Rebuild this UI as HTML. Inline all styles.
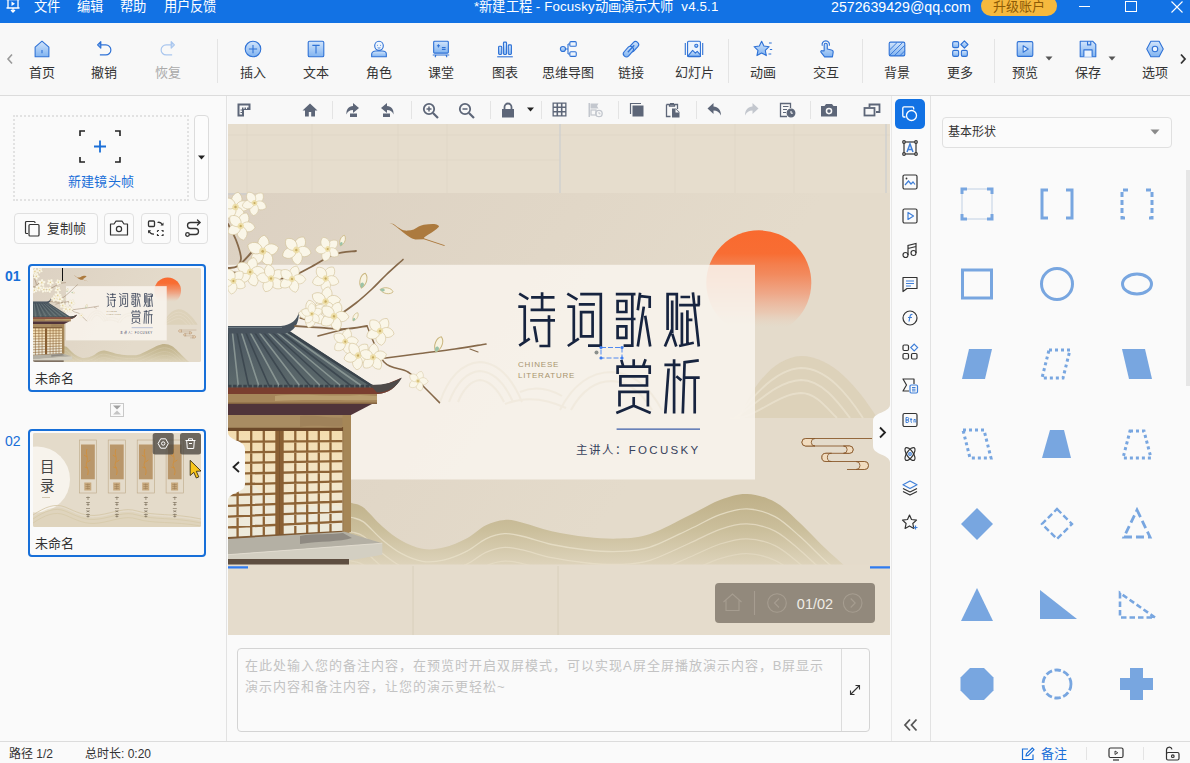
<!DOCTYPE html>
<html lang="zh-CN">
<head>
<meta charset="utf-8">
<title>Focusky</title>
<style>
*{box-sizing:border-box;margin:0;padding:0}
html,body{width:1190px;height:763px;overflow:hidden;background:#fafafa;font-family:"Liberation Sans",sans-serif;}
body{position:relative;color:#333;font-size:14px}
.abs{position:absolute}
#titlebar{position:absolute;left:0;top:0;width:1190px;height:23px;background:#1272e4;color:#fff;font-size:13.300px;line-height:16px;white-space:nowrap}
#titlebar span{position:absolute;top:-1px}
#toolbar{position:absolute;left:0;top:23px;width:1190px;height:73px;background:#f8f8f8;border-bottom:1px solid #dcdcdc}
.tb{position:absolute;top:0;width:80px;margin-left:-40px;text-align:center;height:72px;white-space:nowrap}
.tb svg{position:absolute;left:29px;top:15px;width:22px;height:22px;overflow:visible}
.tb b{position:absolute;left:0;width:80px;top:40.500px;font-weight:normal;font-size:13px;line-height:18px;color:#333}
.tb.dis b{color:#aaa}
.vsep{position:absolute;width:1px;background:#e4e4e4}
#left{position:absolute;left:0;top:96px;width:227px;height:645px;background:#fafafa;border-right:1px solid #e2e2e2}
#ctool{position:absolute;left:228px;top:96px;width:663px;height:28px;background:#f8f8f8}
#canvas{position:absolute;left:228px;top:124px;width:662px;height:511px;background:#e6ddcd;overflow:hidden}
#notes{position:absolute;left:228px;top:635px;width:663px;height:106px;background:#fafafa}
#rbar{position:absolute;left:891px;top:96px;width:40px;height:645px;background:#fafafa;border-right:1px solid #e2e2e2;border-left:1px solid #e8e8e8}
#shapes{position:absolute;left:931px;top:96px;width:259px;height:645px;background:#fafafa}
#status{position:absolute;left:0;top:741px;width:1190px;height:22px;background:#fafafa;border-top:1px solid #dcdcdc;font-size:12px;color:#333}
</style>
</head>
<body>
<div id="titlebar">
<!--TITLEBAR-->
<svg class="abs" style="left:5px;top:-2px" width="16" height="16" viewBox="0 0 16 16" fill="none" stroke="#fff" stroke-width="1.3"><path d="M1.5 1.5h13M3 1.5v8.5h10V1.5M1.5 10h13M8 10v3.5M6 12l2 2 2-2"/><path d="M6.5 3.5v4.5l3.5-2.2z" fill="#fff" stroke="none"/></svg>
<span style="left:34px">文件</span>
<span style="left:77px">编辑</span>
<span style="left:120px">帮助</span>
<span style="left:164px">用户反馈</span>
<span style="left:474px;letter-spacing:0.150px">*新建工程 - Focusky动画演示大师&nbsp; v4.5.1</span>
<span style="left:831px;font-size:14.200px">2572639429@qq.com</span>
<div class="abs" style="left:981px;top:-4px;width:76px;height:20px;border-radius:10px;background:#f6b93e;color:#8d5a06;font-size:13px;line-height:20px;text-align:center;padding-top:1px">升级账户</div>
<div class="abs" style="left:1079px;top:6px;width:11px;height:1px;background:#fff"></div>
<div class="abs" style="left:1125px;top:1px;width:12px;height:11px;border:1px solid #fff"></div>
<svg class="abs" style="left:1171px;top:1px" width="12" height="12" viewBox="0 0 12 12" stroke="#fff" stroke-width="1.1"><path d="M0.5 0.5l11 11M11.5 0.5l-11 11"/></svg>
<!--/TITLEBAR-->
</div>
<div id="toolbar">
<!--TOOLBAR-->
<svg width="0" height="0" style="position:absolute"><defs>
<linearGradient id="g" x1="0" y1="0" x2="0" y2="1"><stop offset="0" stop-color="#d3e5fb"/><stop offset="1" stop-color="#80b3f0"/></linearGradient>
<linearGradient id="gd" x1="0" y1="0" x2="0" y2="1"><stop offset="0" stop-color="#eef4fc"/><stop offset="1" stop-color="#cfe0f6"/></linearGradient>
</defs></svg>
<svg class="abs" style="left:6px;top:30px" width="8" height="12" viewBox="0 0 8 12" fill="none" stroke="#9a9a9a" stroke-width="1.6"><path d="M6 1.5L2 6l4 4.5"/></svg>
<svg class="abs" style="left:1179px;top:30px" width="8" height="12" viewBox="0 0 8 12" fill="none" stroke="#333" stroke-width="1.8"><path d="M2 1.5L6 6l-4 4.5"/></svg>
<div class="tb" style="left:42px"><svg viewBox="0 0 24 24" fill="url(#g)" stroke="#2f72d6" stroke-width="1.2" stroke-linejoin="round"><path d="M12 3.5L4.5 10v10.5h15V10z"/><path d="M12 13v3.5" fill="none"/></svg><b>首页</b></div>
<div class="tb" style="left:104px"><svg viewBox="0 0 24 24" fill="none" stroke="#2f72d6" stroke-width="1.3" stroke-linejoin="round"><path d="M8.5 4L5 7.5 8.5 11z" fill="url(#g)"/><path d="M7 7.5h7a5.5 5.5 0 0 1 0 11H7.5" /></svg><b>撤销</b></div>
<div class="tb dis" style="left:168px"><svg viewBox="0 0 24 24" fill="none" stroke="#a9c6ee" stroke-width="1.3" stroke-linejoin="round"><path d="M15.5 4L19 7.5 15.5 11z" fill="url(#gd)"/><path d="M17 7.5h-7a5.5 5.5 0 0 0 0 11h6.5" /></svg><b>恢复</b></div>
<div class="vsep" style="left:217px;top:16px;height:44px"></div>
<div class="tb" style="left:253px"><svg viewBox="0 0 24 24" fill="url(#g)" stroke="#2f72d6" stroke-width="1.2"><circle cx="12" cy="12" r="8.5"/><path d="M12 7.5v9M7.5 12h9" fill="none"/></svg><b>插入</b></div>
<div class="tb" style="left:316px"><svg viewBox="0 0 24 24" fill="url(#g)" stroke="#2f72d6" stroke-width="1.2"><rect x="3.5" y="3.5" width="17" height="17" rx="1.5"/><path d="M8 8h8M12 8v9" fill="none"/></svg><b>文本</b></div>
<div class="tb" style="left:379px"><svg viewBox="0 0 24 24" fill="url(#g)" stroke="#2f72d6" stroke-width="1.2" stroke-linejoin="round"><path d="M4 20.5v-3c0-2 2-3.3 4.5-3.3h7c2.500 0 4.500 1.300 4.500 3.300v3z"/><ellipse cx="12" cy="8.500" rx="4.700" ry="5" fill="#eef5fd"/><path d="M10.300 7.500v1M13.700 7.500v1M10.500 10.600q1.500 1 3 0" fill="none" stroke-width="0.9"/></svg><b>角色</b></div>
<div class="tb" style="left:441px"><svg viewBox="0 0 24 24" fill="url(#g)" stroke="#2f72d6" stroke-width="1.2" stroke-linejoin="round"><rect x="4" y="3.500" width="16" height="13" rx="1"/><path d="M3 18.500h18M6.500 18.500l-1 2.500M17.500 18.500l1 2.500M7.500 8.500h3.500M9.200 6.800v3.500M13 10.500h4M13 12.500h4" fill="none"/></svg><b>课堂</b></div>
<div class="tb" style="left:505px"><svg viewBox="0 0 24 24" fill="url(#g)" stroke="#2f72d6" stroke-width="1.200" stroke-linejoin="round"><rect x="5" y="9" width="3.400" height="9" rx="1"/><rect x="10.300" y="4.500" width="3.400" height="13.500" rx="1"/><rect x="15.600" y="7.500" width="3.400" height="10.500" rx="1"/><path d="M3.500 20.500h17" fill="none"/></svg><b>图表</b></div>
<div class="tb" style="left:568px"><svg viewBox="0 0 24 24" fill="url(#g)" stroke="#2f72d6" stroke-width="1.200" stroke-linejoin="round"><path d="M8.500 12h3.500M12 6.500v11M12 6.500h2M12 17.500h2" fill="none"/><circle cx="6.500" cy="12" r="2.800"/><rect x="14" y="4" width="7" height="5" rx="1.200" fill="#eef5fd"/><rect x="14" y="15" width="7" height="5" rx="1.200" fill="#eef5fd"/></svg><b>思维导图</b></div>
<div class="tb" style="left:631px"><svg viewBox="0 0 24 24" fill="url(#g)" stroke="#2f72d6" stroke-width="1.200" stroke-linejoin="round"><path d="M10.500 9.500l4-4.500a3.300 3.300 0 0 1 5 4.400l-4.500 5a3.300 3.300 0 0 1-5-0.500a3.300 3.300 0 0 1 0.500-4.400z"/><path d="M4.500 15l4.500-5a3.300 3.300 0 0 1 5 0.500a3.300 3.300 0 0 1-0.500 4.400l-4 4.500a3.300 3.300 0 0 1-5-4.400z"/><path d="M8.500 15.500l7-7.500" fill="none" stroke-width="1.500"/></svg><b>链接</b></div>
<div class="tb" style="left:694px"><svg viewBox="0 0 24 24" fill="url(#g)" stroke="#2f72d6" stroke-width="1.200" stroke-linejoin="round"><path d="M2.500 5.500v13M21.500 5.500v13" fill="none"/><rect x="5" y="3.500" width="14" height="17" rx="1.200" fill="#eef5fd"/><path d="M5.500 19.500l5-6 3 3 2-2 3.500 4v1.500h-13.500z"/><circle cx="14.500" cy="8.500" r="1.700"/></svg><b>幻灯片</b></div>
<div class="vsep" style="left:728px;top:16px;height:44px"></div>
<div class="tb" style="left:763px"><svg viewBox="0 0 24 24" fill="url(#g)" stroke="#2f72d6" stroke-width="1.200" stroke-linejoin="round"><path d="M10.500 3.500l2.500 5.300 5.700.7-4.200 4 1.100 5.700-5.100-2.800-5.100 2.800 1.100-5.700-4.200-4 5.700-.7z"/><path d="M18.500 5.500h3M19.500 12.500h2.500M18 17.500h3" fill="none"/></svg><b>动画</b></div>
<div class="tb" style="left:826px"><svg viewBox="0 0 24 24" fill="url(#g)" stroke="#2f72d6" stroke-width="1.200" stroke-linejoin="round"><path d="M8 8.500a4 4 0 1 1 7.500 0" fill="none"/><path d="M10 14V7.500a1.700 1.700 0 0 1 3.400 0V12l4.600 1c1.300.3 2 1.300 1.800 2.600l-.8 5H10.500L6.500 15.500c-.7-1 .5-2.300 1.600-1.500z"/></svg><b>交互</b></div>
<div class="vsep" style="left:862px;top:16px;height:44px"></div>
<div class="tb" style="left:897px"><svg viewBox="0 0 24 24" fill="url(#g)" stroke="#2f72d6" stroke-width="1.200" stroke-linejoin="round"><rect x="3.500" y="4.500" width="17" height="15" rx="1.500"/><path d="M4 13l8-8M4 19l14-14M9 19.500l11.500-11.500M15 19.500l5.500-5.500" fill="none" stroke-width="1"/></svg><b>背景</b></div>
<div class="tb" style="left:960px"><svg viewBox="0 0 24 24" fill="url(#g)" stroke="#2f72d6" stroke-width="1.200" stroke-linejoin="round"><rect x="4" y="4" width="6.500" height="6.500" rx="1.500"/><rect x="4" y="13.500" width="6.500" height="6.500" rx="1.500"/><rect x="13.500" y="13.500" width="6.500" height="6.500" rx="1.500"/><path d="M16.800 3.200l3.900 3.900-3.900 3.900-3.900-3.900z"/></svg><b>更多</b></div>
<div class="vsep" style="left:994px;top:16px;height:44px"></div>
<div class="tb" style="left:1025px"><svg viewBox="0 0 24 24" fill="url(#g)" stroke="#2f72d6" stroke-width="1.200" stroke-linejoin="round"><rect x="3.500" y="4" width="17" height="16" rx="1.500"/><path d="M10 8.500v7l5.500-3.500z" fill="#eef5fd"/></svg><b>预览</b></div>
<svg class="abs" style="left:1045px;top:33px" width="8" height="5" viewBox="0 0 8 5"><path d="M0.500 0.500h7L4 4.500z" fill="#555"/></svg>
<div class="tb" style="left:1088px"><svg viewBox="0 0 24 24" fill="url(#g)" stroke="#2f72d6" stroke-width="1.200" stroke-linejoin="round"><path d="M3.500 3.500h13.500l3.500 3.500v13.500h-17z"/><path d="M7.500 20.500v-7.500h9v7.500" fill="#eef5fd"/><path d="M11.500 3.500v4h3.500v-4" fill="none"/></svg><b>保存</b></div>
<svg class="abs" style="left:1108px;top:33px" width="8" height="5" viewBox="0 0 8 5"><path d="M0.500 0.500h7L4 4.500z" fill="#555"/></svg>
<div class="tb" style="left:1155px"><svg viewBox="0 0 24 24" fill="url(#g)" stroke="#2f72d6" stroke-width="1.200" stroke-linejoin="round"><path d="M7.500 3.500h9l4.500 8.500-4.500 8.500h-9L3 12z"/><circle cx="12" cy="12" r="3" fill="#eef5fd"/></svg><b>选项</b></div>
<!--/TOOLBAR-->
</div>
<div id="left">
<!--LEFT-->
<div class="abs" style="left:13px;top:19px;width:176px;height:86px;border:2px dotted #e2e2e2;border-radius:1px"></div>
<svg class="abs" style="left:79px;top:34px" width="42" height="33" viewBox="0 0 42 33" fill="none"><path d="M1 6V1h5M36 1h5v5M41 27v5h-5M6 32H1v-5" stroke="#222" stroke-width="1.6"/><path d="M21 10.500v12M15 16.500h12" stroke="#1a6fd8" stroke-width="1.800"/></svg>
<div class="abs" style="left:13px;top:77px;width:176px;text-align:center;color:#1a6fd8;font-size:13px;line-height:18px;letter-spacing:0.3px">新建镜头帧</div>
<div class="abs" style="left:194px;top:19px;width:15px;height:86px;border:1px solid #dcdcdc;border-radius:4px;background:#fcfcfc"></div>
<svg class="abs" style="left:198px;top:59px" width="7" height="5" viewBox="0 0 7 5"><path d="M0 0.500h7L3.500 4.500z" fill="#222"/></svg>
<div class="abs" style="left:14px;top:117px;width:84px;height:31px;border:1px solid #e0e0e0;border-radius:4px;background:#fbfbfb"></div>
<svg class="abs" style="left:24px;top:124px" width="17" height="17" viewBox="0 0 17 17" fill="none" stroke="#333" stroke-width="1.200"><path d="M4 13.500H2.500a1 1 0 0 1-1-1V2.500a1 1 0 0 1 1-1H10a1 1 0 0 1 1 1V3"/><rect x="5" y="4.500" width="10" height="11.500" rx="1"/></svg>
<div class="abs" style="left:47px;top:124px;font-size:13px;line-height:18px;color:#333">复制帧</div>
<div class="abs" style="left:104px;top:117px;width:30px;height:31px;border:1px solid #e0e0e0;border-radius:4px;background:#fbfbfb"></div>
<svg class="abs" style="left:109px;top:123px" width="20" height="18" viewBox="0 0 20 18" fill="none" stroke="#333" stroke-width="1.200" stroke-linejoin="round"><path d="M1.500 5h3.500l2-2.800h6l2 2.800h3.500v11h-17z"/><circle cx="10" cy="10" r="2.600"/></svg>
<div class="abs" style="left:141px;top:117px;width:30px;height:31px;border:1px solid #e0e0e0;border-radius:4px;background:#fbfbfb"></div>
<svg class="abs" style="left:146px;top:122px" width="20" height="20" viewBox="0 0 20 20" fill="none" stroke="#333" stroke-width="1.300"><rect x="2.500" y="3" width="6" height="5.500" rx="1"/><path d="M11.500 12.500h1.500M15.500 12.500h1.500v1.500M17 16v1.500h-1.500M13 17.500h-1.500v-1.500M11.500 14v-1.500" stroke-width="1.200"/><path d="M11.500 4.500q3-1 5 2.500" /><path d="M17.500 4.500v3h-3" fill="#333" stroke="none"/><path d="M8 16q-3.500.5-5-3"/><path d="M2 15.500v-3.200h3.200" fill="#333" stroke="none"/></svg>
<div class="abs" style="left:178px;top:117px;width:30px;height:31px;border:1px solid #e0e0e0;border-radius:4px;background:#fbfbfb"></div>
<svg class="abs" style="left:183px;top:122px" width="20" height="20" viewBox="0 0 20 20" fill="none" stroke="#333" stroke-width="1.300" stroke-linecap="round" stroke-linejoin="round"><path d="M17 4.500H7.500a3 3 0 0 0 0 6h5a3 3 0 0 1 0 6H6.500"/><path d="M14.500 2l2.500 2.500-2.500 2.500"/><circle cx="4.500" cy="16.500" r="1.800"/></svg>

<div class="abs" style="left:5px;top:172px;font-size:14px;font-weight:bold;color:#176fd8;line-height:16px">01</div>
<div class="abs" style="left:28px;top:168px;width:178px;height:128px;border:2px solid #176fd8;border-radius:4px;background:#fafafa"></div>
<div class="abs" id="th1" style="left:33px;top:172px;width:168px;height:94px;overflow:hidden;border-radius:2px;background:#e4dbc9">
<!--TH1-->
<svg class="abs" style="left:0;top:0" width="168" height="94" viewBox="228 193 662 372" preserveAspectRatio="none"><use href="#sA"/><rect x="358" y="264.800" width="397" height="214.700" fill="#f8f4ed" opacity="0.880"/><use href="#sB"/></svg>
<div class="abs" style="left:29px;top:-2px;width:1px;height:15px;background:#111"></div>
<!--/TH1-->
</div>
<div class="abs" style="left:35px;top:274px;font-size:13px;line-height:18px;color:#333">未命名</div>
<div class="abs" style="left:110px;top:307px;width:14px;height:14px;border:1px solid #c8c8c8;background:#fafafa"></div>
<svg class="abs" style="left:112px;top:309px" width="10" height="10" viewBox="0 0 10 10"><path d="M1 0.500h8L5 4.500z" fill="#a0a0a0"/><path d="M1 9.500h8L5 5.500z" fill="#c4c4c4"/></svg>
<div class="abs" style="left:5px;top:337px;font-size:14px;color:#176fd8;line-height:16px">02</div>
<div class="abs" style="left:28px;top:333px;width:178px;height:128px;border:2px solid #176fd8;border-radius:4px;background:#fafafa"></div>
<div class="abs" id="th2" style="left:33px;top:337px;width:168px;height:94px;overflow:hidden;border-radius:2px;background:#e4dbc9">
<!--TH2-->
<svg class="abs" style="left:0;top:0" width="168" height="94" viewBox="0 0 168 94">
<rect width="168" height="94" fill="#e4dbca"/>
<circle cx="4" cy="46.500" r="33" fill="#f7f3ec"/>
<g fill="none" stroke="#d3c5a4" stroke-width="0.800"><path d="M0 82C12 74 22 70 32 74C44 79 52 84 66 82C80 80 92 74 104 78C120 83 140 80 168 86"/><path d="M0 86C12 78 22 74 32 78C44 83 52 88 66 86C80 84 92 78 104 82C120 87 140 84 168 90"/><path d="M0 90C12 82 22 78 32 82C44 87 52 92 66 90C80 88 92 82 104 86C120 91 140 88 168 93"/></g>
<path d="M0 94V84C12 76 22 72 32 76C44 81 52 86 66 84C80 82 92 76 104 80C120 85 140 82 168 88V94Z" fill="#d9cdb0" opacity="0.500"/>
<g font-family="Liberation Sans, sans-serif" font-size="14.500" fill="#444" text-anchor="middle"><text x="14" y="38.500">目</text><text x="14" y="58">录</text></g>
<path d="M9 64.500H17" stroke="#b8a98a" stroke-width="0.600"/>
<g id="bk"><rect x="46.300" y="7" width="17.200" height="53" fill="none" stroke="#bda987" stroke-width="0.600"/><rect x="48" y="11.500" width="13.800" height="34.800" fill="#b9976b"/><path d="M54 16C52 22 56 24 53.500 30C52 34 57 36 54.500 42M51 22L54 24M57.500 27L54.500 29M51.500 34L55 35" fill="none" stroke="#cf8f3c" stroke-width="0.900"/><rect x="51.300" y="49.500" width="7" height="8" fill="#c7a97e"/><path d="M52.500 51.500H57M52.500 53.500H57M52.500 55.500H57M54.800 50.500V56.500" stroke="#9a7b52" stroke-width="0.500"/><path d="M53 64.500H57M55 63.500V67M53 69.500H57M53.500 71.500H56.500M55 69V73M53 75.500H57M53.500 77.500L56.500 79M56.500 77.500L53.500 79M53 81.500H57M55 80.500V84.500M53.500 83.500H56.500" stroke="#6d5f4c" stroke-width="0.550" fill="none"/></g>
<use href="#bk" x="28.900"/><use href="#bk" x="57.900"/><use href="#bk" x="86.800"/>
<rect x="119.700" y="0" width="21" height="21.500" rx="2.500" fill="#4f4a42" opacity="0.800"/>
<rect x="147" y="0" width="21" height="21.500" rx="2.500" fill="#4f4a42" opacity="0.800"/>
<g fill="none" stroke="#fff" stroke-width="1"><path d="M127.700 5.800h5l2.600 4.700-2.600 4.700h-5l-2.600-4.700z"/><circle cx="130.200" cy="10.500" r="1.700"/><path d="M152.500 7.500h10M155.500 7.300v-1.500h4v1.500M153.700 7.800l.6 7.700h6.400l.6-7.700M156 10.500h3"/></g>
<path d="M157.200 27.300V42.500L160.800 39.300L163.300 45L165.800 43.900L163.300 38.300L168 38Z" fill="#f7c51c" stroke="#3a2f10" stroke-width="0.900" stroke-linejoin="round"/>
</svg>
<!--/TH2-->
</div>
<div class="abs" style="left:35px;top:439px;font-size:13px;line-height:18px;color:#333">未命名</div>
<!--/LEFT-->
</div>
<div id="ctool">
<!--CTOOL-->
<style>#ctool svg{position:absolute;top:6px;overflow:visible}</style>
<svg style="left:8px" width="16" height="16" viewBox="0 0 16 16" fill="#5d6678"><path d="M1.500 1.500h13v6.500H8v6.500H1.500zM3.500 3.500v9h2.500v-1.500h-1.500v-1h1.500v-1.500h-1.500v-1h1.500V5.500h1.500v1.500h1V5.500h1.500v1.500h1V5.500h1.500v-2z" fill-rule="evenodd"/></svg>
<svg style="left:74px" width="16" height="16" viewBox="0 0 16 16" fill="#5d6678"><path d="M8 1.500L0.500 8.500h2.500v6h3.800v-4.500h2.400v4.500H13v-6h2.500z"/></svg>
<div class="vsep" style="left:104px;top:5px;height:18px"></div>
<svg style="left:116px" width="16" height="16" viewBox="0 0 16 16" fill="#5d6678"><path d="M9 1l6 5-6 5V8c-3.500 0-5.500 1.500-6.500 4.500C2 7.500 4.500 4.200 9 4z"/><rect x="6" y="11.500" width="7" height="3.500"/></svg>
<svg style="left:152px" width="16" height="16" viewBox="0 0 16 16" fill="#5d6678"><path d="M7 1L1 6l6 5V8c3.500 0 5.500 1.500 6.500 4.500C14 7.500 11.500 4.200 7 4z"/><rect x="3" y="11.500" width="7" height="3.500"/></svg>
<div class="vsep" style="left:183px;top:5px;height:18px"></div>
<svg style="left:194px" width="17" height="17" viewBox="0 0 17 17" fill="none" stroke="#5d6678" stroke-width="1.800"><circle cx="7" cy="7" r="5.200"/><path d="M11 11l5 5" stroke-width="2.200"/><path d="M4.500 7h5M7 4.500v5" stroke-width="1.500"/></svg>
<svg style="left:230px" width="17" height="17" viewBox="0 0 17 17" fill="none" stroke="#5d6678" stroke-width="1.800"><circle cx="7" cy="7" r="5.200"/><path d="M11 11l5 5" stroke-width="2.200"/><path d="M4.500 7h5" stroke-width="1.500"/></svg>
<div class="vsep" style="left:262px;top:5px;height:18px"></div>
<svg style="left:273px" width="14" height="16" viewBox="0 0 14 16" fill="#5d6678"><path d="M1 7h12v8.500H1z"/><path d="M3.500 7.500V5a3.500 3.500 0 0 1 7 0v2.500" fill="none" stroke="#5d6678" stroke-width="1.800"/></svg>
<svg style="left:299px;top:11px" width="7" height="5" viewBox="0 0 7 5"><path d="M0 0.500h7L3.500 4.500z" fill="#222"/></svg>
<div class="vsep" style="left:313px;top:5px;height:18px"></div>
<svg style="left:324px" width="15" height="15" viewBox="0 0 15 15" fill="#5d6678"><path d="M0.500 0.500h14v14h-14zM4.500 1.800H1.800v2.700h2.700zM8.900 1.800H6.100v2.700h2.800zM13.200 1.800h-2.700v2.700h2.700zM4.500 6.100H1.800v2.800h2.700zM8.900 6.100H6.100v2.800h2.800zM13.200 6.100h-2.700v2.800h2.700zM4.500 10.500H1.800v2.700h2.700zM8.900 10.500H6.100v2.700h2.800zM13.200 10.500h-2.700v2.700h2.700z" fill-rule="evenodd"/></svg>
<svg style="left:359px" width="17" height="16" viewBox="0 0 17 16" fill="#c3c7ce"><path d="M1.500 1h1.500v14H1.500zM3.500 1.500h8l-1.500 2.500 1.500 2.500h-8z"/><rect x="4" y="8" width="5" height="5" fill="none" stroke="#c3c7ce" stroke-width="1.200"/><circle cx="12" cy="11.500" r="3.200" fill="none" stroke="#c3c7ce" stroke-width="1.300"/><path d="M12 10v1.800h1.500" fill="none" stroke="#c3c7ce"/></svg>
<div class="vsep" style="left:390px;top:5px;height:18px"></div>
<svg style="left:401px" width="16" height="16" viewBox="0 0 16 16" fill="#5d6678"><path d="M3.500 3.500h11v11h-11z"/><path d="M1.500 12V1.500H12" fill="none" stroke="#5d6678" stroke-width="1.200"/></svg>
<svg style="left:437px" width="16" height="16" viewBox="0 0 16 16" fill="#5d6678"><path d="M5 1h4v2h-4z"/><path d="M1.500 2.500h3v1.500h5V2.500h3V7" fill="none" stroke="#5d6678" stroke-width="1.300"/><path d="M1.500 2.500v12h4" fill="none" stroke="#5d6678" stroke-width="1.300"/><path d="M7 6.500h4l3.500 3.500v5.500H7zM10.500 7v3.500h3.500" /></svg>
<div class="vsep" style="left:468px;top:5px;height:18px"></div>
<svg style="left:479px" width="16" height="16" viewBox="0 0 16 16" fill="#5d6678"><path d="M6.500 1L0.500 6.500l6 5.500V8.500c3.500 0 5.800 1.500 7.500 5C14 8 11 4.800 6.500 4.500z"/></svg>
<svg style="left:515px" width="16" height="16" viewBox="0 0 16 16" fill="#c3c7ce"><path d="M9.500 1l6 5.500-6 5.500V8.500c-3.500 0-5.800 1.500-7.500 5C2 8 5 4.800 9.500 4.500z"/></svg>
<svg style="left:551px" width="17" height="16" viewBox="0 0 17 16" fill="none" stroke="#5d6678" stroke-width="1.300"><path d="M8 14.500H1.500V1.500h10V6"/><path d="M4 4.500h5.500M4 7.500h4M4 10.500h3" stroke-width="1.200"/><circle cx="12" cy="11" r="3.800" fill="#5d6678"/><path d="M12 9v2.200h1.800" stroke="#fff" stroke-width="1"/></svg>
<div class="vsep" style="left:582px;top:5px;height:18px"></div>
<svg style="left:592px" width="18" height="16" viewBox="0 0 18 16" fill="#5d6678"><path d="M1 4h3.500l1.500-2h6l1.500 2H17v10.500H1zM9 5.800a3.300 3.300 0 1 0 0 6.600 3.300 3.300 0 0 0 0-6.600zM9 7.300a1.800 1.800 0 1 1 0 3.600 1.800 1.800 0 0 1 0-3.600z" fill-rule="evenodd"/></svg>
<svg style="left:635px" width="18" height="16" viewBox="0 0 18 16" fill="none" stroke="#5d6678" stroke-width="1.800"><path d="M6.500 5V2.500h10v7.500h-3.500"/><rect x="1.500" y="6" width="10" height="7.500" fill="#f8f8f8"/></svg>
<!--/CTOOL-->
</div>
<div id="canvas">
<!--CANVAS-->
<svg class="abs" style="left:0;top:0" width="662" height="511" viewBox="228 124 662 511" aria-label="诗词歌赋赏析">
<defs>
<linearGradient id="sun" gradientUnits="userSpaceOnUse" x1="0" y1="230" x2="0" y2="336"><stop offset="0" stop-color="#f96a2f"/><stop offset="0.220" stop-color="#f86d33"/><stop offset="0.320" stop-color="#f47e4c"/><stop offset="0.420" stop-color="#f28a5e"/><stop offset="0.600" stop-color="#efa585" stop-opacity="0.950"/><stop offset="0.780" stop-color="#ebc2aa" stop-opacity="0.750"/><stop offset="0.920" stop-color="#e8d3bf" stop-opacity="0"/><stop offset="1" stop-color="#e8d3bf" stop-opacity="0"/></linearGradient>
<linearGradient id="bgs" gradientUnits="userSpaceOnUse" x1="228" y1="193" x2="640" y2="470"><stop offset="0" stop-color="#dcd1c2"/><stop offset="0.600" stop-color="#e1d7c7"/><stop offset="1" stop-color="#e4dbcb"/></linearGradient>
<linearGradient id="wav" gradientUnits="userSpaceOnUse" x1="0" y1="495" x2="0" y2="566"><stop offset="0" stop-color="#bfb088"/><stop offset="0.500" stop-color="#cbbf9c"/><stop offset="1" stop-color="#ded4bc"/></linearGradient>
<linearGradient id="pane" gradientUnits="userSpaceOnUse" x1="0" y1="431" x2="0" y2="538"><stop offset="0" stop-color="#f3dcae"/><stop offset="0.450" stop-color="#f4e6c8"/><stop offset="1" stop-color="#eee9da"/></linearGradient>
<linearGradient id="roof" gradientUnits="userSpaceOnUse" x1="0" y1="330" x2="0" y2="388"><stop offset="0" stop-color="#4b5761"/><stop offset="1" stop-color="#5c696b"/></linearGradient>
<g id="fl"><g fill="#faf6e8" stroke="#d3c39a" stroke-width="0.500"><path d="M0 0C-5.500-2.500-5.500-9.500 0-12C5.500-9.500 5.500-2.500 0 0Z"/><path d="M0 0C-5.500-2.500-5.500-9.500 0-12C5.500-9.500 5.500-2.500 0 0Z" transform="rotate(72)"/><path d="M0 0C-5.500-2.500-5.500-9.500 0-12C5.500-9.500 5.500-2.500 0 0Z" transform="rotate(144)"/><path d="M0 0C-5.500-2.500-5.500-9.500 0-12C5.500-9.500 5.500-2.500 0 0Z" transform="rotate(216)"/><path d="M0 0C-5.500-2.500-5.500-9.500 0-12C5.500-9.500 5.500-2.500 0 0Z" transform="rotate(288)"/></g><circle r="2.600" fill="#ecdda4" opacity="0.900"/><circle r="1" fill="#c9ae62"/></g>
<g id="bud"><path d="M0 0C-3-3-2.500-8 0-9.500C2.500-8 3-3 0 0Z" fill="#f8f3e1" stroke="#c9b57e" stroke-width="0.600"/><path d="M0 0C-1.500-1.500-1.500-3 0-3.500C1.500-3 1.500-1.500 0 0Z" fill="#9cc3a8"/></g>
</defs>
<rect x="228" y="124" width="662" height="511" fill="#e6ddcd"/>
<g id="sA"><rect x="228" y="193" width="662" height="373" fill="url(#bgs)"/>
<path d="M247 124V193M312 124V193M398 124V193M447 124V193M560 124V193M675 124V193M735 124V193M794 124V193M886 124V193M250 566V635M334 566V635M400 566V635M448 566V635M559 566V635M640 566V635M720 566V635M806 566V635M884 566V635M228 135H890M228 160H560M228 581H890M228 610H700" stroke="#dbd1bf" stroke-width="0.700" fill="none" opacity="0.700"/>
<path d="M228 194H248M886 124V193M560 124V193M558 566V635" stroke="#c3cbd6" stroke-width="0.800" fill="none"/>
<circle cx="758.800" cy="282.800" r="52.500" fill="url(#sun)"/>
<path d="M740 418C752 385 775 357 801 356C832 356 858 388 876 416L876 418Z" fill="#cdbf98" opacity="0.330"/>
<path d="M737 418C752 397 775 369 801 368C827 368 848 395 863 418" fill="none" stroke="#e9e0cd" stroke-width="1.900" opacity="0.850"/>
<path d="M734 418C752 409 775 381 801 380C822 380 838 402 850 418" fill="none" stroke="#e9e0cd" stroke-width="1.900" opacity="0.850"/>
<path d="M730 418C752 422 775 394 801 393C817 393 828 410 837 418" fill="none" stroke="#e9e0cd" stroke-width="1.900" opacity="0.850"/>
</g>
<rect x="228" y="264.800" width="527" height="214.700" fill="#f8f4ed" opacity="0.880"/>
<g id="sB">
<g fill="none" stroke="#efe8da" stroke-width="2" opacity="0.700"><path d="M440 402C448 378 462 363 480 362C498 363 512 378 522 402"/><path d="M449 402C456 384 466 372 480 371C494 372 505 384 513 402"/><path d="M458 402C463 390 470 381 480 380C490 381 498 390 504 402"/><path d="M560 410C572 386 590 372 612 372C634 373 650 388 662 410"/><path d="M571 410C581 392 595 381 612 381C629 382 642 393 652 410"/><path d="M520 392C534 386 548 388 562 396M505 404C525 396 545 398 566 408"/></g>
<path d="M340.0 500.0C342.0 500.5 347.9 501.7 351.8 503.0C355.7 504.3 358.4 503.7 363.5 507.6C368.6 511.5 376.1 521.0 382.4 526.5C388.7 532.0 394.5 536.9 401.2 540.6C407.9 544.3 415.3 547.6 422.4 548.8C429.4 550.0 436.1 549.4 443.5 547.6C450.9 545.8 459.9 541.9 467.0 538.2C474.1 534.5 479.6 528.3 485.9 525.3C492.2 522.2 498.4 520.3 504.7 519.9C511.0 519.5 515.6 521.0 523.5 522.9C531.4 524.8 541.2 528.9 551.8 531.2C562.4 533.6 575.6 535.8 587.0 537.0C598.4 538.2 609.5 539.0 620.0 538.5C630.5 538.0 638.3 537.9 650.0 534.0C661.7 530.1 678.3 520.7 690.0 515.0C701.7 509.3 710.5 503.5 720.0 500.0C729.5 496.5 737.8 493.7 747.0 494.0C756.2 494.3 766.2 497.2 775.0 502.0C783.8 506.8 791.7 515.3 800.0 523.0C808.3 530.7 817.5 540.8 825.0 548.0C832.5 555.2 841.7 563.0 845.0 566.0L845 566L340 566Z" fill="url(#wav)"/>
<path d="M340.0 514.7C342.0 515.1 347.9 516.3 351.8 517.5C355.7 518.7 358.4 518.2 363.5 521.9C368.6 525.7 376.1 534.7 382.4 540.0C388.7 545.2 394.5 549.9 401.2 553.4C407.9 557.0 415.3 560.1 422.4 561.3C429.4 562.4 436.1 561.8 443.5 560.1C450.9 558.4 459.9 554.7 467.0 551.1C474.1 547.6 479.6 541.7 485.9 538.8C492.2 535.9 498.4 534.0 504.7 533.7C511.0 533.3 515.6 534.7 523.5 536.5C531.4 538.3 541.2 542.2 551.8 544.5C562.4 546.7 575.6 548.8 587.0 550.0C598.4 551.2 609.5 551.9 620.0 551.4C630.5 551.0 638.3 550.9 650.0 547.1C661.7 543.4 678.3 534.4 690.0 529.0C701.7 523.6 710.5 518.0 720.0 514.7C729.5 511.3 737.8 508.6 747.0 508.9C756.2 509.2 766.2 512.0 775.0 516.6C783.8 521.2 791.7 529.3 800.0 536.6C808.3 543.9 817.5 553.7 825.0 560.5C832.5 567.3 841.7 574.8 845.0 577.7" fill="none" stroke="#e8dfc8" stroke-width="1.300" opacity="0.85"/>
<path d="M340.0 529.3C342.0 529.8 347.9 530.9 351.8 532.0C355.7 533.2 358.4 532.7 363.5 536.2C368.6 539.8 376.1 548.4 382.4 553.4C388.7 558.4 394.5 562.9 401.2 566.3C407.9 569.6 415.3 572.7 422.4 573.7C429.4 574.8 436.1 574.2 443.5 572.6C450.9 571.0 459.9 567.5 467.0 564.1C474.1 560.7 479.6 555.1 485.9 552.3C492.2 549.6 498.4 547.8 504.7 547.4C511.0 547.1 515.6 548.4 523.5 550.2C531.4 551.9 541.2 555.6 551.8 557.7C562.4 559.9 575.6 561.9 587.0 563.0C598.4 564.1 609.5 564.8 620.0 564.4C630.5 563.9 638.3 563.8 650.0 560.3C661.7 556.7 678.3 548.1 690.0 543.0C701.7 537.8 710.5 532.5 720.0 529.3C729.5 526.1 737.8 523.6 747.0 523.9C756.2 524.2 766.2 526.7 775.0 531.1C783.8 535.5 791.7 543.3 800.0 550.2C808.3 557.2 817.5 566.5 825.0 573.0C832.5 579.5 841.7 586.6 845.0 589.4" fill="none" stroke="#e8dfc8" stroke-width="1.300" opacity="0.75"/>
<path d="M340.0 544.0C342.0 544.4 347.9 545.5 351.8 546.6C355.7 547.7 358.4 547.2 363.5 550.6C368.6 553.9 376.1 562.1 382.4 566.9C388.7 571.7 394.5 575.9 401.2 579.1C407.9 582.3 415.3 585.2 422.4 586.2C429.4 587.2 436.1 586.7 443.5 585.2C450.9 583.6 459.9 580.2 467.0 577.0C474.1 573.8 479.6 568.5 485.9 565.9C492.2 563.2 498.4 561.5 504.7 561.2C511.0 560.8 515.6 562.2 523.5 563.8C531.4 565.4 541.2 568.9 551.8 571.0C562.4 573.0 575.6 574.9 587.0 576.0C598.4 577.0 609.5 577.7 620.0 577.3C630.5 576.9 638.3 576.8 650.0 573.4C661.7 570.0 678.3 561.9 690.0 557.0C701.7 552.1 710.5 547.0 720.0 544.0C729.5 541.0 737.8 538.5 747.0 538.8C756.2 539.1 766.2 541.5 775.0 545.7C783.8 549.9 791.7 557.2 800.0 563.9C808.3 570.5 817.5 579.3 825.0 585.5C832.5 591.7 841.7 598.5 845.0 601.1" fill="none" stroke="#e8dfc8" stroke-width="1.300" opacity="0.65"/>
<path d="M340.0 558.6C342.0 559.0 347.9 560.1 351.8 561.1C355.7 562.1 358.4 561.7 363.5 564.9C368.6 568.1 376.1 575.9 382.4 580.4C388.7 584.9 394.5 588.9 401.2 591.9C407.9 595.0 415.3 597.7 422.4 598.7C429.4 599.6 436.1 599.1 443.5 597.7C450.9 596.2 459.9 593.0 467.0 590.0C474.1 586.9 479.6 581.9 485.9 579.4C492.2 576.9 498.4 575.3 504.7 575.0C511.0 574.6 515.6 575.9 523.5 577.4C531.4 579.0 541.2 582.3 551.8 584.2C562.4 586.2 575.6 588.0 587.0 589.0C598.4 590.0 609.5 590.6 620.0 590.2C630.5 589.8 638.3 589.7 650.0 586.5C661.7 583.3 678.3 575.6 690.0 570.9C701.7 566.3 710.5 561.5 720.0 558.6C729.5 555.8 737.8 553.4 747.0 553.7C756.2 554.0 766.2 556.3 775.0 560.3C783.8 564.2 791.7 571.2 800.0 577.5C808.3 583.8 817.5 592.1 825.0 598.0C832.5 603.9 841.7 610.3 845.0 612.8" fill="none" stroke="#e8dfc8" stroke-width="1.300" opacity="0.55"/>
<rect x="228" y="564.500" width="662" height="71" fill="#e5dccc"/>
<path d="M413 566V635M558 566V635" stroke="#d6ccb8" stroke-width="0.800"/>
<g fill="#f1dcbf" stroke="#8a5a2c" stroke-width="0.900"><path d="M872 438.500H805.700A3.750 3.750 0 0 0 805.700 446H849.500A3.650 3.650 0 0 1 849.500 453.300H826A4.100 4.100 0 0 0 826 461.500H864.500A4 4 0 0 1 864.500 469.500H847" fill="none"/><path d="M815 438.500H805.700A3.750 3.750 0 0 0 805.700 446H815A3.750 3.750 0 0 1 815 438.500Z"/><path d="M843.500 446H849.500A3.650 3.650 0 0 1 849.500 453.300H843.500A3.650 3.650 0 0 0 843.500 446Z"/><path d="M831.500 453.300H826A4.100 4.100 0 0 0 826 461.500H831.500A4.100 4.100 0 0 1 831.500 453.300Z"/><path d="M856 461.500H864.500A4 4 0 0 1 864.500 469.500H856A4 4 0 0 0 856 461.500Z"/></g>
<path d="M228 414H351V531L343 538H228Z" fill="#a98c62"/>
<path d="M300 416C315 414 335 420 350 417V426C335 428 315 424 300 427Z" fill="#9a7c55" opacity="0.600"/>
<rect x="342.500" y="414" width="8.500" height="118" fill="#a58657"/>
<path d="M342.500 427V533" stroke="#7a5530" stroke-width="1.200"/>
<path d="M228 431H342.500V531.700L228 538Z" fill="url(#pane)"/>
<path d="M228 470C250 476 262 498 280 505C300 512 330 500 342 508V531.700L228 538Z" fill="#ece9dc" opacity="0.700"/>
<path d="M237.6 431V537.5M251.2 431V536.7M263.8 431V536.0M295.3 431V534.3M307.2 431V533.6M318.8 431V533.0M330.5 431V532.4M228 441.7L342.5 441.1M228 452.4L342.5 451.1M228 463.1L342.5 461.2M228 473.8L342.5 471.3M228 484.5L342.5 481.4M228 495.2L342.5 491.4M228 505.9L342.5 501.5M228 516.6L342.5 511.6M228 527.3L342.5 521.6" stroke="#8e6436" stroke-width="2.300" fill="none"/>
<path d="M279.500 431V535" stroke="#8a6034" stroke-width="8.400"/>
<path d="M279.500 431V535" stroke="#74502c" stroke-width="1" opacity="0.600"/>
<path d="M228 429.400H343" stroke="#6c4829" stroke-width="3.200"/>
<path d="M228 538.200L342.500 532" stroke="#7e5a34" stroke-width="2.600"/>
<path d="M228 403.500H373L351 415H228Z" fill="#50343a"/>
<path d="M228 391.500H377V404H228Z" fill="#a6865a"/>
<path d="M275 396C300 393 330 397 360 395L377 396V400C350 401 310 399 275 401Z" fill="#c2a878" opacity="0.700"/>
<path d="M228 403.200H377" stroke="#6b4a30" stroke-width="0.800"/>
<path d="M228 330L288 332L372 386C386 385 395 382 401 378C396 388 388 393 378 394L376 388H228Z" fill="url(#roof)"/>
<path d="M228.0 331.0L228.0 386M236.6 331.0L248.6 386M245.1 331.0L269.1 386M253.7 331.0L289.7 386M262.3 331.0L310.3 386M270.9 331.0L330.9 386M279.4 331.0L351.4 386M288.0 331.0L372.0 386" stroke="#3d4850" stroke-width="1.600" fill="none"/>
<path d="M232.3 331.0L238.3 386M240.9 331.0L258.9 386M249.4 331.0L279.4 386M258.0 331.0L300.0 386M266.6 331.0L320.6 386M275.1 331.0L341.1 386M283.7 331.0L361.7 386" stroke="#919d9a" stroke-width="1.600" fill="none" opacity="0.850"/>
<path d="M288 332L372 386" stroke="#3a444c" stroke-width="2.200"/>
<path d="M228 386.300H373" stroke="#39424a" stroke-width="3" stroke-dasharray="3.500 1.600"/>
<path d="M228 387.500H378L401 378C396 388 388 393 378 394H228Z" fill="#7a3e2f"/>
<path d="M370 385C386 385 395 382 402 377.500C396 388 388 392 377 392.500Z" fill="#4e4a48"/>
<path d="M228 326H281C291 325 297 320 299 312C299 324 294 332 284 333.500H228Z" fill="#48535d"/>
<path d="M228 327.500H282" stroke="#6d7a82" stroke-width="1"/>
<path d="M228 539L344.600 531.700L382.300 543.200L228 554.700Z" fill="#b4b0a4"/>
<path d="M300 536C315 533 330 535 343 533L352 538C340 542 320 541 300 544Z" fill="#7f7b74" opacity="0.700"/>
<path d="M228 554.700L382.300 543.200V554.700L348.800 560.500H228Z" fill="#d3cfc2"/>
<path d="M228 554.700L382.300 543.200" stroke="#e4e0d4" stroke-width="0.800"/>
<path d="M228 559H349V564.500H228Z" fill="#5e4e40"/>
<path d="M228.0 224.0C229.3 226.7 233.8 234.3 236.0 240.0C238.2 245.7 240.7 253.7 241.0 258.0C241.3 262.3 238.5 264.7 238.0 266.0" fill="none" stroke="#86694a" stroke-width="1.8" stroke-linecap="round"/>
<path d="M228.0 268.0C229.7 267.7 234.2 268.5 238.0 266.0C241.8 263.5 248.8 255.2 251.0 253.0" fill="none" stroke="#86694a" stroke-width="2.0" stroke-linecap="round"/>
<path d="M228.0 272.0C231.7 272.3 240.7 272.9 250.0 274.0C259.3 275.1 274.2 279.5 284.0 278.5C293.8 277.5 300.7 272.0 309.0 268.0C317.3 264.0 326.2 257.3 334.0 254.5C341.8 251.7 352.3 251.6 356.0 251.0" fill="none" stroke="#86694a" stroke-width="1.8" stroke-linecap="round"/>
<path d="M403.0 259.5C400.2 262.1 391.2 270.1 386.0 275.0C380.8 279.9 377.0 284.3 372.0 289.0C367.0 293.7 361.7 298.5 356.0 303.0C350.3 307.5 341.0 313.8 338.0 316.0" fill="none" stroke="#86694a" stroke-width="1.7" stroke-linecap="round"/>
<path d="M295.0 326.0C299.3 326.3 312.7 327.2 321.0 327.7C329.3 328.2 337.3 329.3 345.0 329.0C352.7 328.7 363.3 326.5 367.0 326.0" fill="none" stroke="#86694a" stroke-width="1.8" stroke-linecap="round"/>
<path d="M318.0 336.0C322.5 334.8 340.5 330.2 345.0 329.0" fill="none" stroke="#86694a" stroke-width="1.5" stroke-linecap="round"/>
<path d="M382.0 358.5C388.3 357.7 407.8 355.1 420.0 353.5C432.2 351.9 444.0 350.6 455.0 349.0C466.0 347.4 480.8 344.8 486.0 344.0" fill="none" stroke="#86694a" stroke-width="1.6" stroke-linecap="round"/>
<path d="M367.0 326.0C369.8 332.0 377.2 354.3 384.0 362.0C390.8 369.7 401.2 367.7 408.0 372.0C414.8 376.3 419.8 382.9 425.0 388.0C430.2 393.1 437.1 400.2 439.5 402.6" fill="none" stroke="#86694a" stroke-width="1.5" stroke-linecap="round"/>
<path d="M300.0 318.0C302.7 318.7 309.7 322.3 316.0 322.0C322.3 321.7 334.3 317.0 338.0 316.0" fill="none" stroke="#86694a" stroke-width="1.3" stroke-linecap="round"/>
<path d="M470.0 349.0C471.3 349.5 476.7 351.5 478.0 352.0" fill="none" stroke="#86694a" stroke-width="1.2" stroke-linecap="round"/>
<use href="#fl" transform="translate(235.5 207.0) rotate(10) scale(1.25)"/>
<use href="#fl" transform="translate(254.5 203.0) rotate(40) scale(1.05)"/>
<use href="#fl" transform="translate(240.7 226.0) rotate(25) scale(1.20)"/>
<use href="#fl" transform="translate(262.7 251.3) rotate(5) scale(1.35)"/>
<use href="#fl" transform="translate(296.3 250.0) rotate(30) scale(1.25)"/>
<use href="#fl" transform="translate(327.7 249.0) rotate(50) scale(1.05)"/>
<use href="#fl" transform="translate(250.2 272.0) rotate(15) scale(1.25)"/>
<use href="#fl" transform="translate(271.0 278.5) rotate(60) scale(1.20)"/>
<use href="#fl" transform="translate(292.0 279.0) rotate(20) scale(1.15)"/>
<use href="#fl" transform="translate(325.6 278.5) rotate(35) scale(1.15)"/>
<use href="#fl" transform="translate(233.4 281.0) rotate(45) scale(1.10)"/>
<use href="#fl" transform="translate(325.6 301.6) rotate(10) scale(1.25)"/>
<use href="#fl" transform="translate(313.0 314.0) rotate(55) scale(1.20)"/>
<use href="#fl" transform="translate(334.0 316.3) rotate(20) scale(1.25)"/>
<use href="#fl" transform="translate(380.0 331.0) rotate(30) scale(1.20)"/>
<use href="#fl" transform="translate(345.2 341.6) rotate(15) scale(1.10)"/>
<use href="#fl" transform="translate(358.0 355.5) rotate(40) scale(1.20)"/>
<use href="#fl" transform="translate(373.0 357.3) rotate(5) scale(1.15)"/>
<use href="#fl" transform="translate(311.9 313.9) rotate(70) scale(0.90)"/>
<use href="#fl" transform="translate(418.0 381.0) rotate(20) scale(0.85)"/>
<use href="#bud" transform="translate(340.5 246.0) rotate(20) scale(1.20)"/>
<use href="#bud" transform="translate(361.3 288.0) rotate(15) scale(1.60)"/>
<use href="#bud" transform="translate(380.0 289.5) rotate(100) scale(1.40)"/>
<use href="#bud" transform="translate(435.8 352.0) rotate(20) scale(1.70)"/>
<use href="#bud" transform="translate(353.0 321.0) rotate(30) scale(1.00)"/>
<path d="M389.300 223.100L393.500 223.900C396 225.500 398 227.500 399.400 228.100C401 229.500 402.500 230 403.600 230.200C405 230.600 406.500 230.700 407.800 230.600C410 230.300 412 229.900 413.700 229.400C415.500 228.500 417 227.500 418.700 226.400C420.500 225.500 422 225 423.800 224.700C428 224.200 432 224 435.500 224.200C437 224.600 438.300 225.200 438.900 226L438.900 226.800C437.500 228.300 435.800 229.700 433.900 231C432 232.300 430 233.600 428 234.800C426.500 235.800 425 236.800 423.800 237.800L424.500 238.400L444.800 245.300L444.400 245.900L423.800 239.300L415.400 239.500C413 238.800 411 238 409.500 236.900C407.500 235.600 405.500 234.200 403.600 232.700C401.500 231.200 399.500 229.600 397.700 228.100C396 226.800 394.300 225.500 392.700 224.300Z" fill="#ac7a3e"/>
<path d="M519.2 293.7L528.3 299.2M518.3 306.6H524.7V341M519.2 345.6L529.7 338.7M531.1 297.4H554.5M542.1 292.3V309.8M530.6 309.8H555M530.2 320.3H555M549 315.3V346H539.4M534.3 326.3L537.1 342.3M567.3 293.7L577.4 299.7M567.3 306.6H573.8V341.9M567.8 346L578.8 338.7M580.2 294.2H600.8V345.6H588M578.8 304.3H594.9M581.1 312.1H592.6V336.4H581.1ZM615.8 294.2H635.5M632.3 294.2V345.6H623.6M617.6 301H626.3V312H617.6ZM615.8 319H635.5M617.6 326.3H626.3V337.8H617.6ZM640.1 292.8L637.8 310.2M640.1 296.2L649.7 297.2V308M643.8 306.6L637.8 346.5M645.2 315.7L650.2 346.5M667.6 330V294.2H676.8V330M672.2 300.6V333M672.2 329L664.9 346.5M672.2 333.6L676.3 346.5M680.5 297H690.1M679.1 305.2H699.7M692.9 292.3L698.8 346.5M698.8 295.5V305.2M687.4 310.2V343.7M687.4 319.9H692.4M681.9 312.5V345.4M679.1 346L693.8 342.8M621.3 359.8L623.1 365.8M633.7 359.3V366.2M645.6 359.3L643.3 365.8M617.6 374V366.7H649.7V374M620.4 376.3H647V385.5H620.4ZM619.5 406.6V391.9H647.9V406.6M633.7 397V405.7M616.3 413L633.7 405.7L650.7 413M664.4 364.8H680.5M674.1 359.3V413.5M668.6 368.5L665.3 413.5M676.3 376.3L681.4 380.4M698.8 360.3L684.6 362.3L682.8 413.5M684.6 377.7H699.7M694.7 377.7V413.5" fill="none" stroke="#17243f" stroke-width="2.700" stroke-linecap="butt" stroke-linejoin="miter"/>
<g font-family="Liberation Sans, sans-serif" font-size="8" fill="#a8946e" letter-spacing="0.800"><text x="518" y="366.500">CHINESE</text><text x="518" y="377.500">LITERATURE</text></g>
<path d="M616.600 429.200H700" stroke="#3a5ca8" stroke-width="1.300"/>
<text x="700.500" y="453.500" text-anchor="end" font-family="Liberation Sans, sans-serif" font-size="11.500" fill="#36425c" letter-spacing="2.300">主讲人：FOCUSKY</text>
</g>
<g><circle cx="596.500" cy="352.500" r="2" fill="#8a8f8c"/><rect x="601" y="347.500" width="21" height="10.500" fill="none" stroke="#3d7df0" stroke-width="0.900" stroke-dasharray="5 2"/><g fill="#3d7df0"><circle cx="601" cy="347.500" r="1.600"/><circle cx="622" cy="347.500" r="1.600"/><circle cx="601" cy="358" r="1.600"/><circle cx="622" cy="358" r="1.600"/></g></g>
<path d="M228 567.300H248M870 567.300H890" stroke="#2f7bf0" stroke-width="2.200"/>
<rect x="715" y="583" width="160" height="40" rx="4" fill="#72695d" opacity="0.720"/>
<g fill="none" stroke="#a69d90" stroke-width="1.100"><path d="M723.500 602L732.500 594L741.500 602M726 600V610.500H739V600"/><path d="M754.500 591V615"/><circle cx="777" cy="603" r="9.300"/><path d="M779 598.500L774.500 603L779 607.500"/><circle cx="852.700" cy="603" r="9.300"/><path d="M850.700 598.500L855.200 603L850.700 607.500"/></g>
<text x="815" y="608.500" text-anchor="middle" font-family="Liberation Sans, sans-serif" font-size="14.500" fill="#efece5">01/02</text>
<path d="M228 433C229 441 245 440 245 449V484C245 493 229 492 228 500Z" fill="#fafafa"/>
<path d="M239 462L233.500 467L239 472" fill="none" stroke="#222" stroke-width="1.800"/>
<path d="M890 405C889 413 873 412 873 421V446C873 455 889 454 890 462Z" fill="#fafafa"/>
<path d="M880 427.500L885 432.500L880 437.500" fill="none" stroke="#222" stroke-width="1.800"/>
</svg>
<!--/CANVAS-->
</div>
<div id="notes">
<!--NOTES-->
<div class="abs" style="left:9px;top:13px;width:633px;height:84px;border:1px solid #d4d4d4;border-radius:4px;background:#fafafa"></div>
<div class="abs" style="left:613px;top:14px;width:1px;height:82px;background:#dcdcdc"></div>
<div class="abs" style="left:17px;top:20px;width:586px;font-size:13px;line-height:21px;color:#c3c3c3;letter-spacing:1px">在此处输入您的备注内容，在预览时开启双屏模式，可以实现A屏全屏播放演示内容，B屏显示演示内容和备注内容，让您的演示更轻松~</div>
<svg class="abs" style="left:621px;top:49px" width="12" height="12" viewBox="0 0 12 12" fill="none" stroke="#333" stroke-width="1.100"><path d="M1.500 10.500l9-9M6.500 1.500h4v4M5.500 10.500h-4v-4"/></svg>
<!--/NOTES-->
</div>
<div id="rbar">
<!--RBAR-->
<style>#rbar svg{position:absolute;left:9px;overflow:visible}</style>
<div class="abs" style="left:3px;top:3px;width:30px;height:30px;border-radius:5px;background:#1272e4"></div>
<svg style="top:9px" width="18" height="18" viewBox="0 0 18 18" fill="none" stroke="#fff" stroke-width="1.300"><path d="M4.500 12H3a1.200 1.200 0 0 1-1.200-1.200V3A1.200 1.200 0 0 1 3 1.800h8.500A1.200 1.200 0 0 1 12.700 3v1.500"/><circle cx="10.500" cy="10.500" r="5" fill="#1272e4"/></svg>
<svg style="top:43px" width="18" height="18" viewBox="0 0 18 18" fill="none" stroke="#333" stroke-width="1.200"><rect x="3" y="3" width="12" height="12"/><circle cx="3" cy="3" r="1.300" fill="#fafafa"/><circle cx="15" cy="3" r="1.300" fill="#fafafa"/><circle cx="3" cy="15" r="1.300" fill="#fafafa"/><circle cx="15" cy="15" r="1.300" fill="#fafafa"/><path d="M6 13l3-8 3 8M7 10.500h4" stroke="#3f7fd8" stroke-width="1.500"/></svg>
<svg style="top:77px" width="18" height="18" viewBox="0 0 18 18" fill="none" stroke="#333" stroke-width="1.200"><rect x="2" y="2" width="14" height="14" rx="1.500"/><path d="M4 12l3.500-4 2.500 3 2-2 2 2.500" stroke="#3f7fd8"/><circle cx="5.500" cy="5.500" r="0.900" fill="#333" stroke="none"/></svg>
<svg style="top:111px" width="18" height="18" viewBox="0 0 18 18" fill="none" stroke="#333" stroke-width="1.200"><rect x="2" y="2" width="14" height="14" rx="1.500"/><path d="M7 5.500v7l5.500-3.500z" stroke="#3f7fd8" stroke-linejoin="round"/></svg>
<svg style="top:145px" width="18" height="18" viewBox="0 0 18 18" fill="none" stroke="#333" stroke-width="1.200"><circle cx="4.500" cy="14" r="2.500"/><circle cx="12.500" cy="12" r="2.500"/><path d="M7 14V4.500l8-2V12M7 7.500l8-2"/></svg>
<svg style="top:179px" width="18" height="18" viewBox="0 0 18 18" fill="none" stroke="#333" stroke-width="1.200" stroke-linejoin="round"><path d="M2 2.500h14v11H6L2 16.500z"/><path d="M5 6h8M5 8.500h8M5 11h5" stroke="#3f7fd8"/></svg>
<svg style="top:213px" width="18" height="18" viewBox="0 0 18 18" fill="none" stroke="#333" stroke-width="1.200"><circle cx="9" cy="9" r="7"/><path d="M11.500 5.500q-2-.5-2.500 2l-1 5M7 8.500h4" stroke="#3f7fd8"/></svg>
<svg style="top:247px" width="18" height="18" viewBox="0 0 18 18" fill="none" stroke="#333" stroke-width="1.200"><rect x="2" y="2" width="5.500" height="5.500" rx="1.200"/><rect x="2" y="10.500" width="5.500" height="5.500" rx="1.200"/><rect x="10.500" y="10.500" width="5.500" height="5.500" rx="1.200"/><path d="M13.200 1.200l3.400 3.400-3.400 3.400-3.400-3.400z" stroke="#3f7fd8"/></svg>
<svg style="top:281px" width="18" height="18" viewBox="0 0 18 18" fill="none" stroke="#333" stroke-width="1.200" stroke-linejoin="round"><path d="M8 14H2L5.500 8 2 2h11v5"/><rect x="9" y="8" width="7.500" height="8" rx="1.200" stroke="#3f7fd8" fill="#fafafa"/><path d="M11 10.500h3.500M11 12.200h3.500M11 13.900h3.500" stroke="#3f7fd8" stroke-width="1"/></svg>
<svg style="top:315px" width="18" height="18" viewBox="0 0 18 18" fill="none" stroke="#333" stroke-width="1.200"><rect x="2" y="2.500" width="14" height="13" rx="1.500"/><path d="M5 6.500v5h1.800a1.300 1.300 0 0 0 0-2.500H5h1.500a1.200 1.200 0 0 0 0-2.500zM10 7v3.500q0 1 1 1M9.200 8.500h2M13 11.500v-3q1.800-.5 1.800 1v2" stroke="#3f7fd8" stroke-width="1"/></svg>
<svg style="top:349px" width="18" height="18" viewBox="0 0 18 18" fill="none" stroke="#333" stroke-width="1.200"><ellipse cx="9" cy="9" rx="3.200" ry="7.500" transform="rotate(35 9 9)"/><ellipse cx="9" cy="9" rx="3.200" ry="7.500" transform="rotate(-35 9 9)"/><circle cx="9" cy="9" r="1.300" stroke="#3f7fd8"/></svg>
<svg style="top:383px" width="18" height="18" viewBox="0 0 18 18" fill="none" stroke="#333" stroke-width="1.200" stroke-linejoin="round"><path d="M2 9.500l7 3.500 7-3.500M2 12.500l7 3.500 7-3.500"/><path d="M9 2L2 5.800l7 3.700 7-3.700z" stroke="#3f7fd8"/></svg>
<svg style="top:417px" width="18" height="18" viewBox="0 0 18 18" fill="none" stroke="#333" stroke-width="1.200" stroke-linejoin="round"><path d="M8.500 2l2 4.500 5 .6-3.700 3.400 1 4.900-4.300-2.500-4.400 2.500 1-4.900L1.500 7.100l5-.6z"/><path d="M14.500 12.500v4M12.500 14.500h4" stroke="#3f7fd8"/></svg>
<svg style="top:622px;left:11px" width="15" height="14" viewBox="0 0 15 14" fill="none" stroke="#555" stroke-width="1.800"><path d="M7 1.500L2 7l5 5.500M13.500 1.500L8.500 7l5 5.500"/></svg>
<!--/RBAR-->
</div>
<div id="shapes">
<!--SHAPES-->
<div class="abs" style="left:11px;top:21px;width:230px;height:31px;border:1px solid #e0e0e0;border-radius:4px;background:#fbfbfb"></div>
<div class="abs" style="left:17px;top:27px;font-size:12px;line-height:18px;color:#333">基本形状</div>
<svg class="abs" style="left:219px;top:33px" width="10" height="6" viewBox="0 0 10 6"><path d="M0.500 0.500h9L5 5.500z" fill="#8a8a8a"/></svg>
<div class="abs" style="left:255px;top:74px;width:4px;height:216px;background:#e6e6e6"></div>
<svg class="abs" style="left:0;top:0" width="259" height="645" viewBox="931 96 259 645" fill="none" stroke="#78a6e0" stroke-width="3">
<!-- row1 -->
<g transform="translate(977 204)"><path d="M-15-15h30v30h-30z" stroke="#dde5ef" stroke-width="2"/><path d="M-10-15h-5v5M10-15h5v5M15 10v5h-5M-10 15h-5v-5" stroke-width="3"/></g>
<g transform="translate(1057 204)"><path d="M-9-14h-6v28h6M9-14h6v28h-6"/></g>
<g transform="translate(1137 204)"><path d="M-9-14h-6v28h6M9-14h6v28h-6" stroke-dasharray="5 3"/></g>
<!-- row2 -->
<rect x="962.500" y="270" width="29" height="28"/>
<circle cx="1057" cy="284" r="15.500"/>
<ellipse cx="1137" cy="284" rx="14.500" ry="10"/>
<!-- row3 -->
<g fill="#78a6e0" stroke="none">
<path d="M969 349h23l-7 30h-23z"/>
<path d="M1122 349h23l7 30h-23z"/>
<path d="M1050 430h14l7 28h-29z"/>
<path d="M977 508l16 16-16 16-16-16z"/>
<path d="M977 588l16 33h-32z"/>
<path d="M1040 590v29h37z"/>
<path d="M970 668h14l9.500 9.500v13L984 700h-14l-9.500-9.500v-13z"/>
<path d="M1130 668h13v10h10v12h-10v10h-13v-10h-10v-12h10z"/>
</g>
<path d="M1049 350h21l-7 28h-21z" stroke-dasharray="3 3"/>
<path d="M963 430h21l7 28h-21z" stroke-dasharray="3 3"/>
<path d="M1130 431h14l7 27h-28z" stroke-dasharray="3 3"/>
<path d="M1057 509l15 15-15 15-15-15z" stroke-dasharray="6 3" stroke-width="2.400"/>
<path d="M1137 510l13 27h-26z" stroke-dasharray="8 4" stroke-width="2.800"/>
<path d="M1120 593v24.500h35z" stroke-dasharray="5.500 3" stroke-width="2.600"/>
<circle cx="1057" cy="684" r="14" stroke-dasharray="6.500 2.500" stroke-width="2.800"/>
</svg>
<!--/SHAPES-->
</div>
<div id="status">
<!--STATUS-->
<div class="abs" style="left:9px;top:3px;line-height:18px;font-size:12px">路径 1/2</div>
<div class="abs" style="left:85px;top:3px;line-height:18px;font-size:12px">总时长: 0:20</div>
<svg class="abs" style="left:1021px;top:5px" width="14" height="14" viewBox="0 0 14 14" fill="none" stroke="#1a6fd8" stroke-width="1.200"><path d="M12 7.500V12.500H1.500V2H7"/><path d="M5 9l.6-2.300L11.300 1l1.700 1.700L7.300 8.400z" stroke-linejoin="round"/></svg>
<div class="abs" style="left:1041px;top:3px;line-height:18px;font-size:13px;color:#1a6fd8">备注</div>
<div class="vsep" style="left:1086px;top:5px;height:13px"></div>
<svg class="abs" style="left:1108px;top:5px" width="16" height="14" viewBox="0 0 16 14" fill="none" stroke="#333" stroke-width="1.200"><rect x="1" y="1" width="14" height="9.500" rx="1.500"/><path d="M5 13h6"/><path d="M7 4v3.500l2.800-1.700z" stroke-width="0.900"/></svg>
<div class="vsep" style="left:1143px;top:5px;height:13px"></div>
<svg class="abs" style="left:1164px;top:4px" width="16" height="15" viewBox="0 0 16 15" fill="none" stroke="#333" stroke-width="1.200"><rect x="2.500" y="6.500" width="12.500" height="7.500" rx="1.500"/><path d="M2.500 8V4a2.800 2.800 0 0 1 5.500-.7"/><circle cx="8.800" cy="10.200" r="1.300"/></svg>
<!--/STATUS-->
</div>
</body>
</html>
